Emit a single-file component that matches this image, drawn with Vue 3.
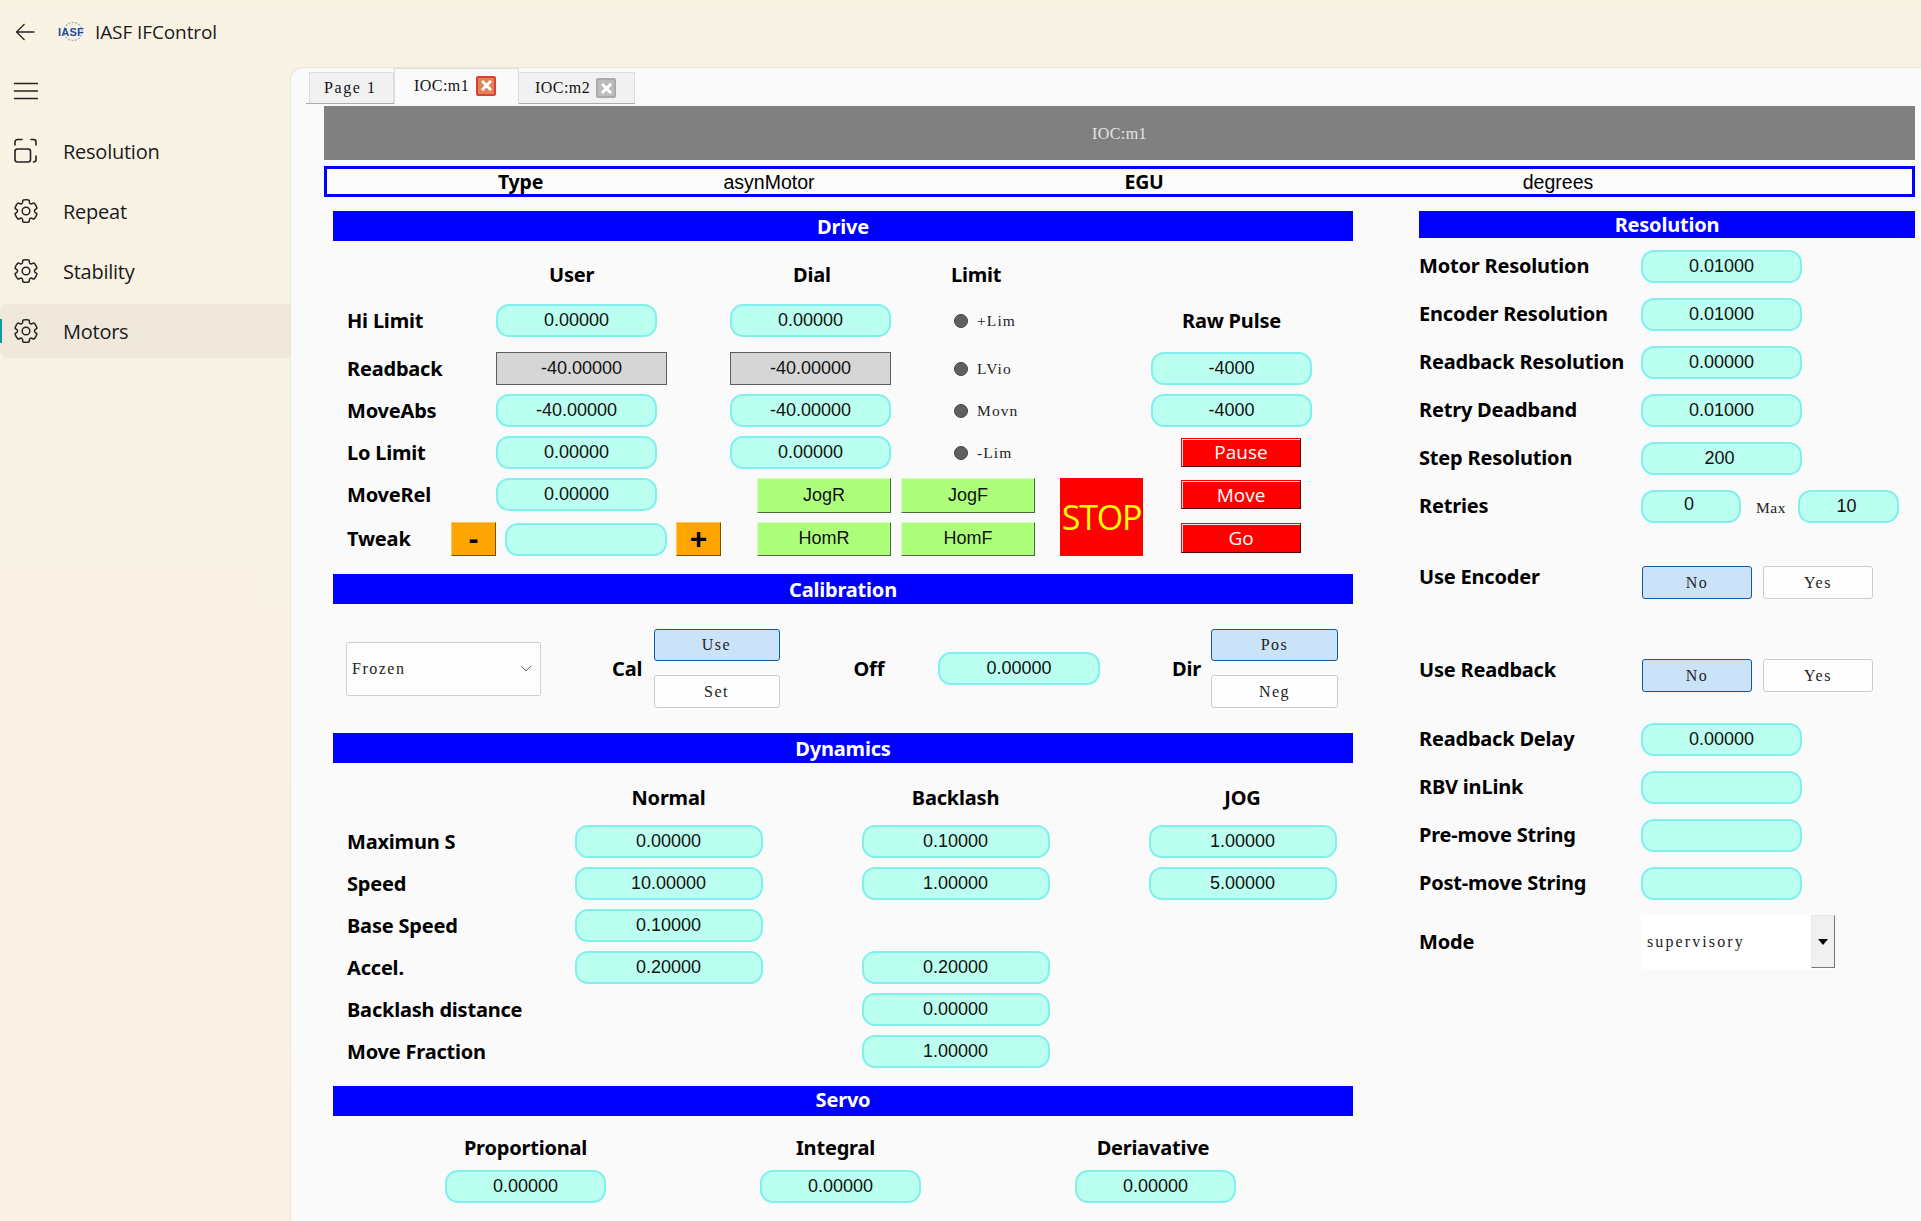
<script setup>
const gear = "M12.012 2.25c.734.008 1.465.093 2.181.253a.75.75 0 0 1 .582.649l.17 1.527a1.384 1.384 0 0 0 1.927 1.116l1.401-.615a.75.75 0 0 1 .85.174 9.792 9.792 0 0 1 2.204 3.792.75.75 0 0 1-.271.825l-1.242.916a1.381 1.381 0 0 0 0 2.226l1.243.915a.75.75 0 0 1 .272.826 9.797 9.797 0 0 1-2.204 3.792.75.75 0 0 1-.848.175l-1.407-.617a1.38 1.38 0 0 0-1.926 1.114l-.169 1.526a.75.75 0 0 1-.572.647 9.518 9.518 0 0 1-4.406 0 .75.75 0 0 1-.572-.647l-.168-1.524a1.382 1.382 0 0 0-1.926-1.11l-1.406.616a.75.75 0 0 1-.849-.175 9.798 9.798 0 0 1-2.204-3.796.75.75 0 0 1 .272-.826l1.243-.916a1.38 1.38 0 0 0 0-2.226l-1.243-.914a.75.75 0 0 1-.271-.826 9.793 9.793 0 0 1 2.204-3.792.75.75 0 0 1 .85-.174l1.4.615a1.387 1.387 0 0 0 1.93-1.118l.17-1.526a.75.75 0 0 1 .583-.65c.717-.159 1.45-.243 2.202-.252Z"
const nav = [
  { label: 'Resolution', icon: 'res' },
  { label: 'Repeat', icon: 'gear' },
  { label: 'Stability', icon: 'gear' },
  { label: 'Motors', icon: 'gear', active: true },
]
const limits = { hi: '+Lim', rb: 'LVio', ma: 'Movn', lo: '-Lim' }
const dynRows = [
  { label: 'Maximun S', v: ['0.00000', '0.10000', '1.00000'] },
  { label: 'Speed', v: ['10.00000', '1.00000', '5.00000'] },
  { label: 'Base Speed', v: ['0.10000', null, null] },
  { label: 'Accel.', v: ['0.20000', '0.20000', null] },
  { label: 'Backlash distance', v: [null, '0.00000', null] },
  { label: 'Move Fraction', v: [null, '1.00000', null] },
]
const resRows = [
  ['Motor Resolution', '0.01000'],
  ['Encoder Resolution', '0.01000'],
  ['Readback Resolution', '0.00000'],
  ['Retry Deadband', '0.01000'],
  ['Step Resolution', '200'],
]
const linkRows = [
  ['Readback Delay', '0.00000'],
  ['RBV inLink', ''],
  ['Pre-move String', ''],
  ['Post-move String', ''],
]
</script>

<template>
  <div class="app">
    <header class="titlebar">
      <svg class="back" width="20" height="20" viewBox="0 0 20 20" fill="none" stroke="#222" stroke-width="1.3">
        <path d="M9.5 2 1.5 10l8 8M1.5 10h18" />
      </svg>
      <svg class="logo" width="28" height="24" viewBox="0 0 28 24">
        <circle cx="15" cy="11.500" r="9" fill="none" stroke="#9fb3d6" stroke-width="1.300" stroke-dasharray="2 1.400" />
        <text x="0" y="16" class="logotext">IASF</text>
      </svg>
      <span class="apptitle">IASF IFControl</span>
    </header>
    <div class="body">
      <aside class="side">
        <svg class="burger" width="26" height="18" viewBox="0 0 26 18" stroke="#222" stroke-width="1.5">
          <path d="M1 1.5h24M1 9h24M1 16.5h24" />
        </svg>
        <nav class="nav">
          <div v-for="n in nav" :key="n.label" class="navitem" :class="{ on: n.active }">
            <svg v-if="n.icon === 'gear'" class="navicon" width="28" height="28" viewBox="0 0 24 24" fill="none" stroke="#222" stroke-width="1.250" stroke-linejoin="round">
              <path :d="gear" />
              <circle cx="12" cy="12" r="3.300" />
            </svg>
            <svg v-else class="navicon" width="28" height="28" viewBox="0 0 28 28" fill="none" stroke="#222" stroke-width="1.600" stroke-linecap="round">
              <rect x="3" y="12" width="15.500" height="13" rx="2.500" />
              <path d="M3 8V5a2.500 2.500 0 0 1 2.500-2.500H10M19 2.500h2.500A2.500 2.500 0 0 1 24 5v3M24 19v3.500a2.500 2.500 0 0 1-2.500 2.500" />
            </svg>
            <span>{{ n.label }}</span>
          </div>
        </nav>
      </aside>
      <main class="panel">
        <div class="tabbar">
          <div class="tab first"><span>Page 1</span></div>
          <div class="tab active">
            <span class="ioc">IOC:m1</span>
            <i class="close red"><svg width="11" height="11" viewBox="0 0 11 11" stroke="#fff" stroke-width="3"><path d="M1 1l9 9M10 1l-9 9" /></svg></i>
          </div>
          <div class="tab third">
            <span class="ioc">IOC:m2</span>
            <i class="close grey"><svg width="11" height="11" viewBox="0 0 11 11" stroke="#fff" stroke-width="3"><path d="M1 1l9 9M10 1l-9 9" /></svg></i>
          </div>
        </div>
        <div class="pane">
          <div class="greybar">IOC:m1</div>
          <div class="typebar">
            <b>Type</b><span>asynMotor</span><b>EGU</b><span>degrees</span>
          </div>
          <div class="columns">
            <div class="leftcol">
              <h2 class="band">Drive</h2>
              <div class="drivehead">
                <b class="c-user">User</b><b class="c-dial">Dial</b><b class="c-limit">Limit</b>
              </div>
              <div class="driverow">
                <b class="lab">Hi Limit</b>
                <div class="pill w161">0.00000</div>
                <div class="pill w161">0.00000</div>
                <div class="led"><i></i>{{ limits.hi }}</div>
                <b class="rawhead">Raw Pulse</b>
              </div>
              <div class="driverow mt15">
                <b class="lab">Readback</b>
                <div class="ro w171">-40.00000</div>
                <div class="ro w161">-40.00000</div>
                <div class="led"><i></i>{{ limits.rb }}</div>
                <div class="pill w161">-4000</div>
              </div>
              <div class="driverow mt9">
                <b class="lab">MoveAbs</b>
                <div class="pill w161">-40.00000</div>
                <div class="pill w161">-40.00000</div>
                <div class="led"><i></i>{{ limits.ma }}</div>
                <div class="pill w161">-4000</div>
              </div>
              <div class="driverow mt9">
                <b class="lab">Lo Limit</b>
                <div class="pill w161">0.00000</div>
                <div class="pill w161">0.00000</div>
                <div class="led"><i></i>{{ limits.lo }}</div>
                <button class="redbtn pause">Pause</button>
              </div>
              <div class="moves">
                <div class="movesleft">
                  <div class="mrow">
                    <b class="lab">MoveRel</b>
                    <div class="pill w161">0.00000</div>
                  </div>
                  <div class="trow">
                    <b class="lab tlab">Tweak</b>
                    <button class="orange">-</button>
                    <div class="pill w162"></div>
                    <button class="orange">+</button>
                  </div>
                </div>
                <div class="jog">
                  <button class="green">JogR</button>
                  <button class="green">JogF</button>
                  <button class="green">HomR</button>
                  <button class="green">HomF</button>
                </div>
                <div class="stop">STOP</div>
                <div class="redcol">
                  <button class="redbtn">Move</button>
                  <button class="redbtn go">Go</button>
                </div>
              </div>

              <h2 class="band">Calibration</h2>
              <div class="calib">
                <div class="combo"><span>Frozen</span>
                  <svg width="12" height="8" viewBox="0 0 12 8" fill="none" stroke="#666" stroke-width="1"><path d="M1 1l5 5 5-5" /></svg>
                </div>
                <b class="cal-l">Cal</b>
                <div class="stack s126">
                  <button class="tog on">Use</button>
                  <button class="tog">Set</button>
                </div>
                <b class="off-l">Off</b>
                <div class="pill w162">0.00000</div>
                <b class="dir-l">Dir</b>
                <div class="stack s127">
                  <button class="tog on">Pos</button>
                  <button class="tog">Neg</button>
                </div>
              </div>

              <h2 class="band">Dynamics</h2>
              <div class="dynhead">
                <b>Normal</b><b>Backlash</b><b>JOG</b>
              </div>
              <div v-for="r in dynRows" :key="r.label" class="dynrow">
                <b class="lab">{{ r.label }}</b>
                <template v-for="(v, i) in r.v" :key="i">
                  <div v-if="v" class="pill w188">{{ v }}</div>
                  <div v-else class="w188"></div>
                </template>
              </div>

              <h2 class="band servo">Servo</h2>
              <div class="servohead">
                <b>Proportional</b><b>Integral</b><b>Deriavative</b>
              </div>
              <div class="servorow">
                <div class="pill w161">0.00000</div>
                <div class="pill w161">0.00000</div>
                <div class="pill w161">0.00000</div>
              </div>
            </div>

            <div class="rightcol">
              <h2 class="band rband">Resolution</h2>
              <div class="rrows">
                <div v-for="r in resRows" :key="r[0]" class="rrow">
                  <b>{{ r[0] }}</b>
                  <div class="pill w161" :class="{ shift: r[1] === '200' }">{{ r[1] }}</div>
                </div>
                <div class="rrow">
                  <b>Retries</b>
                  <div class="pill w100 retry0">0</div>
                  <span class="max">Max</span>
                  <div class="pill w101 shift">10</div>
                </div>
              </div>
              <div class="yesno first">
                <b>Use Encoder</b>
                <button class="tog on yn">No</button>
                <button class="tog yn">Yes</button>
              </div>
              <div class="yesno second">
                <b>Use Readback</b>
                <button class="tog on yn">No</button>
                <button class="tog yn">Yes</button>
              </div>
              <div class="rrows links">
                <div v-for="r in linkRows" :key="r[0]" class="rrow">
                  <b>{{ r[0] }}</b>
                  <div class="pill w161">{{ r[1] }}</div>
                </div>
              </div>
              <div class="rrow moderow">
                <b>Mode</b>
                <div class="mode">
                  <span class="modeval">supervisory</span>
                  <span class="modebtn"><i></i></span>
                </div>
              </div>
            </div>
          </div>
        </div>
      </main>
    </div>
  </div>
</template>

<style>
html, body { margin: 0; padding: 0; overflow: hidden; }
</style>

<style scoped>
* { box-sizing: border-box; }
.app {
  width: 1921px; height: 1221px; overflow: hidden;
  background: linear-gradient(180deg, #f9f3e4 0%, #f9f2e5 50%, #fbf0e6 100%);
  font-family: "Open Sans", "Noto Sans", sans-serif;
  color: #1a1a1a;
  display: flex; flex-direction: column;
}
.titlebar { height: 67px; flex: none; display: flex; align-items: center; padding: 0 0 4px 15px; }
.back { flex: none; }
.logo { margin-left: 23px; flex: none; }
.logotext { font: 700 11px "Liberation Sans", sans-serif; fill: #1d4a9a; letter-spacing: .2px; }
.apptitle { margin-left: 9px; font-size: 19px; letter-spacing: -.1px; }
.body { flex: 1; display: flex; min-height: 0; }
.side { width: 290px; flex: none; display: flex; flex-direction: column; }
.burger { margin: 15px 0 0 13px; flex: none; }
.nav { margin-top: 24px; display: flex; flex-direction: column; gap: 6px; }
.navitem { height: 54px; display: flex; align-items: center; padding-left: 12px; gap: 23px; font-size: 20px; letter-spacing: -.25px; position: relative; border-radius: 8px 0 0 8px; }
.navicon { flex: none; }
.navitem.on { background: #efe8db; }
.navitem.on::before { content: ""; position: absolute; left: 0; top: 15px; width: 2px; height: 24px; background: #0f9ba5; }
.panel { flex: 1; background: #fafafa; border-top: 1px solid #ebe6da; border-left: 1px solid #ebe6da; border-top-left-radius: 13px; padding-left: 15px; min-width: 0; }
.tabbar { height: 36px; display: flex; align-items: flex-end; padding-left: 3px; border-bottom: 1px solid #aaa; width: 329px; font: 16px "Liberation Serif", serif; letter-spacing: 1.6px; color: #111; }
.tab { height: 31px; background: #f1f1f1; border: 1px solid #ddd; border-bottom: 0; display: flex; align-items: center; white-space: pre; }
.tab.first { width: 85px; padding-left: 14px; }
.tab.active { height: 36px; width: 125px; background: #fafafa; margin-bottom: -1px; padding: 0 0 2px 19px; gap: 7px; }
.tab.third { width: 116px; padding-left: 16px; gap: 6px; border-left: 0; }
.ioc { letter-spacing: .45px; }
.close { width: 20px; height: 20px; display: flex; align-items: center; justify-content: center; border-radius: 2px; border: 2px solid; }
.close.red { background: #e28058; border-color: #dc4030; }
.close.grey { background: #bcbcbc; border-color: #aaa; }
.pane { padding: 2px 6px 0 18px; }
.greybar { height: 54px; background: #808080; color: #e4e4e4; display: flex; align-items: center; justify-content: center; font: 16px "Liberation Serif", serif; letter-spacing: .45px; padding-top: 1px; }
.typebar { margin-top: 6px; height: 31px; border: 3px solid #0000ff; background: #fcfcfc; display: grid; grid-template-columns: 387px 110px 640px 188px; align-items: center; justify-items: center; font: 19.500px/1 "Liberation Sans", sans-serif; color: #000; padding-top: 1px; }
.typebar b { font-family: "Noto Sans", sans-serif; font-size: 19.500px; }
.typebar span { font-size: 19.500px; padding-top: 2px; }
.columns { display: flex; margin-top: 14px; padding-left: 9px; }
.leftcol { width: 1020px; flex: none; }
.rightcol { width: 496px; flex: none; margin-left: 66px; }
b { font-family: "Noto Sans", sans-serif; font-weight: 700; font-size: 20px; color: #000; letter-spacing: -.2px; white-space: nowrap; }
.band { margin: 0; height: 30px; background: #0000ff; color: #fff; font: 700 20px/31px "Noto Sans", sans-serif; letter-spacing: -.2px; text-align: center; }
.rband { height: 27px; line-height: 27px; }
.pill { height: 33px; background: #baffef; border: 2px solid #7ff0ec; border-radius: 13px; font: 18px/29px "Liberation Sans", sans-serif; color: #111; text-align: center; flex: none; }
.shift { padding-right: 4px; }
.retry0 { line-height: 24px; padding-right: 4px; }
.w161 { width: 161px; }
.w162 { width: 162px; }
.w171 { width: 171px; }
.w188 { width: 188px; flex: none; }
.w100 { width: 100px; }
.w101 { width: 101px; }
.ro { height: 33px; background: #d6d6d6; border: 1.500px solid #5d5d5d; font: 18px/30px "Liberation Sans", sans-serif; color: #111; text-align: center; flex: none; }
.lab { flex: none; }

.drivehead { height: 63px; display: grid; grid-template-columns: 163px 234px 221px; }
.drivehead b { padding-top: 22px; line-height: 24px; justify-self: start; }
.c-user { grid-column: 2; margin-left: 53px; }
.c-dial { grid-column: 3; margin-left: 63px; }
.c-limit { grid-column: 4; }
.driverow { display: grid; grid-template-columns: 163px 234px 221px 200px 1fr; align-items: center; height: 33px; }
.driverow .lab { padding-left: 14px; }
.mt15 { margin-top: 15px; }
.mt9 { margin-top: 9px; }
.rawhead { justify-self: start; margin-left: 31px; }
.led { display: flex; align-items: center; font: 15.500px "Liberation Serif", serif; letter-spacing: 1.100px; color: #222; gap: 9px; padding-left: 3px; }
.led i { width: 14px; height: 14px; border-radius: 50%; background: #5f5f5f; border: 1px solid #444; flex: none; }
.redbtn { width: 120px; height: 29px; padding: 0; background: #ff0000; color: #fff; font: 19px "Open Sans", sans-serif; border: 1px solid; border-color: #ff0000 #5a0000 #5a0000 #ff0000; box-shadow: inset 1px 1px 0 #ffd6d6; display: block; line-height: 26px; }
.pause { margin-left: 30px; margin-top: -1px; }
.moves { display: flex; margin-top: 9px; height: 78px; margin-bottom: 18px; }
.movesleft { width: 424px; flex: none; display: flex; flex-direction: column; }
.mrow { height: 33px; display: flex; align-items: center; }
.mrow .lab { width: 163px; padding-left: 14px; }
.trow { margin-top: 11px; height: 34px; display: flex; align-items: center; }
.tlab { width: 118px; padding-left: 14px; line-height: 26px; }
.trow .pill { margin: 0 9px; }
.orange { width: 45px; height: 34px; padding: 0; background: #ffa500; border: 1px solid; border-color: #ffc860 #7a5000 #7a5000 #ffc860; color: #000; font: 700 30px/1 "Liberation Sans", sans-serif; }
.jog { width: 278px; flex: none; display: grid; grid-template-columns: 134px 134px; gap: 9px 10px; grid-auto-rows: 34.500px; }
.green { background: #adff7b; border: 1px solid; border-color: #d8ffc0 #4a6a3a #4a6a3a #d8ffc0; padding: 0; font: 18px "Liberation Sans", sans-serif; color: #111; }
.stop { width: 83px; height: 78px; margin-left: 25px; flex: none; background: #ff0000; color: #ffff00; font: 34px/78px "Open Sans", sans-serif; letter-spacing: -1.200px; white-space: nowrap; display: flex; justify-content: center; }
.redcol { margin-left: 38px; padding-top: 2px; display: flex; flex-direction: column; gap: 14px; }
.redcol .go { height: 30px; }

.calib { height: 129px; display: flex; align-items: center; }
.combo { width: 195px; height: 54px; margin-left: 13px; background: #fdfdfd; border: 1px solid #d0d0d0; border-radius: 2px; display: flex; align-items: center; justify-content: space-between; padding: 0 8px 0 5px; font: 16px "Liberation Serif", serif; letter-spacing: 1.500px; color: #222; flex: none; }
.cal-l { margin-left: 71px; width: 41.500px; }
.stack { display: flex; flex-direction: column; gap: 14px; flex: none; }
.s126 { width: 126px; }
.s127 { width: 127px; }
.tog { height: 33px; padding: 0; background: #fefefe; border: 1px solid #ccc; border-radius: 3px; font: 16px "Liberation Serif", serif; letter-spacing: 1.500px; color: #222; }
.tog.on { background: #cbe3f9; border-color: #0f5a9e; height: 32px; }
.off-l { margin-left: 74px; width: 84.500px; }
.dir-l { margin-left: 72px; width: 39px; }

.dynhead { height: 62px; display: grid; padding: 21px 0 0 241.500px; grid-template-columns: 188px 99px 188px 99px 188px; }
.dynhead b { justify-self: center; line-height: 27px; }
.dynhead b:nth-child(2) { grid-column: 3; }
.dynhead b:nth-child(3) { grid-column: 5; }
.dynrow { height: 33px; margin-bottom: 9px; display: flex; align-items: center; gap: 99px; }
.dynrow .lab { width: 241.500px; padding-left: 14px; margin-right: -99px; }
.servo { margin-top: 18px; line-height: 28px; }
.servohead { height: 54px; display: grid; padding-top: 20px; margin-left: 112px; grid-template-columns: 161px 154px 161px 154px 161px; }
.servohead b { justify-self: center; line-height: 24px; }
.servohead b:nth-child(2) { grid-column: 3; margin-right: 10px; }
.servohead b:nth-child(3) { grid-column: 5; margin-right: 5px; }
.servorow { display: flex; gap: 154px; margin-left: 112px; }

.rrows { margin-top: 12px; display: flex; flex-direction: column; gap: 15px; }
.rrow { display: flex; align-items: center; height: 33px; }
.rrow b { width: 222px; flex: none; line-height: 30px; padding-bottom: 1px; }
.max { font: 15.500px "Liberation Serif", serif; letter-spacing: .5px; margin: 3px 15px 0 15px; color: #222; width: 27px; white-space: nowrap; }
.yesno { display: flex; align-items: flex-start; }
.yesno b { width: 223px; flex: none; line-height: 22px; }
.yesno.first { margin-top: 43px; }
.yesno.second { margin-top: 60px; }
.yn { width: 110px; height: 33px !important; margin-right: 11px; }
.links { margin-top: 31px; }
.moderow { margin-top: 15px; height: 54px; }
.mode { width: 194px; height: 54px; display: flex; background: #fff; }
.modeval { width: 170px; padding: 7px 0 0 6px; font: 16px/40px "Liberation Serif", serif; letter-spacing: 2.100px; color: #222; }
.modebtn { width: 24px; height: 53px; background: #f0f0f0; border: 1px solid; border-color: #e8e8e8 #777 #777 #e8e8e8; display: flex; justify-content: center; padding-top: 23px; }
.modebtn i { width: 0; height: 0; border-style: solid; border-width: 6px 5px 0; border-color: #000 transparent transparent; }
</style>
